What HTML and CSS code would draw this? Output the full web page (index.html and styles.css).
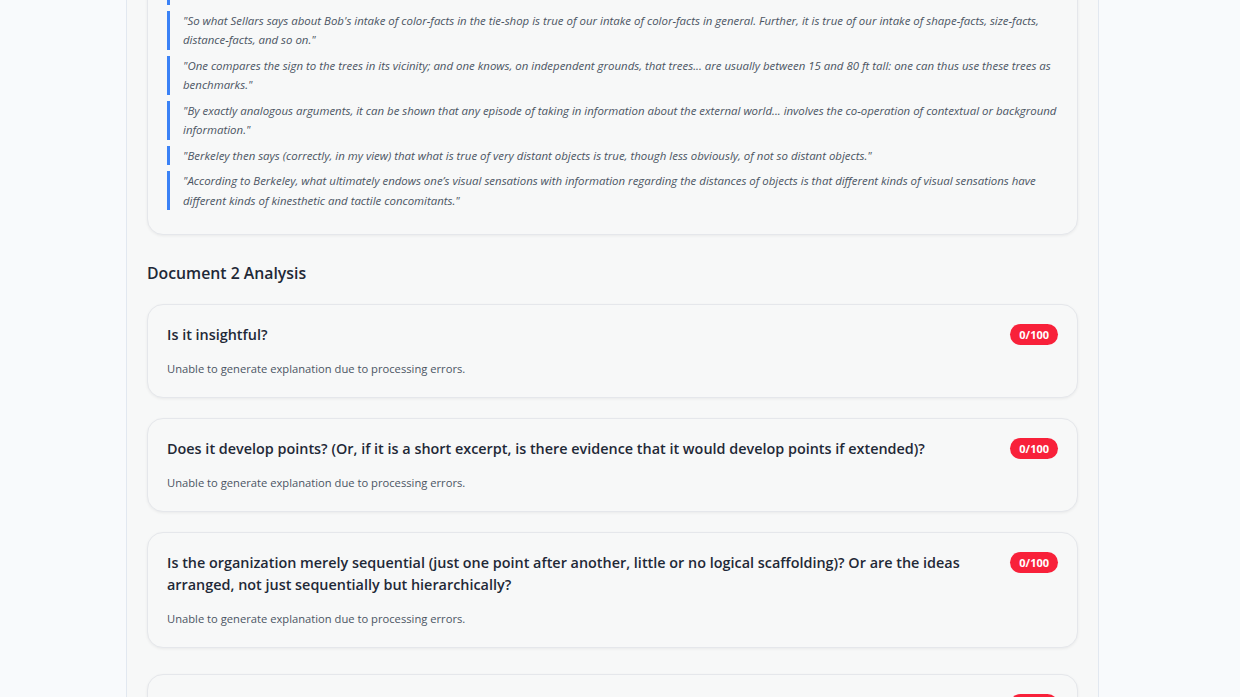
FILE: index.html
```html
<!DOCTYPE html>
<html lang="en">
<head>
<meta charset="utf-8">
<title>Document Analysis</title>
<link rel="stylesheet" href="styles.css">
</head>
<body>
<main class="container">
  <section class="card quotes-card">
    <div class="quotes">
      <blockquote class="quote">"The same is true in the other cases."</blockquote>
      <blockquote class="quote">"So what Sellars says about Bob's intake of color-facts in the tie-shop is true of our intake of color-facts in general. Further, it is true of our intake of shape-facts, size-facts, distance-facts, and so on."</blockquote>
      <blockquote class="quote">"One compares the sign to the trees in its vicinity; and one knows, on independent grounds, that trees... are usually between 15 and 80 ft tall: one can thus use these trees as benchmarks."</blockquote>
      <blockquote class="quote">"By exactly analogous arguments, it can be shown that any episode of taking in information about the external world... involves the co-operation of contextual or background information."</blockquote>
      <blockquote class="quote">"Berkeley then says (correctly, in my view) that what is true of very distant objects is true, though less obviously, of not so distant objects."</blockquote>
      <blockquote class="quote">"According to Berkeley, what ultimately endows one’s visual sensations with information regarding the distances of objects is that different kinds of visual sensations have different kinds of kinesthetic and tactile concomitants."</blockquote>
    </div>
  </section>

  <h2 class="section-title">Document 2 Analysis</h2>

  <div class="criteria">
    <article class="card criterion">
      <div class="criterion-head">
        <h3 class="criterion-title">Is it insightful?</h3>
        <span class="score">0/100</span>
      </div>
      <p class="criterion-text">Unable to generate explanation due to processing errors.</p>
    </article>
    <article class="card criterion">
      <div class="criterion-head">
        <h3 class="criterion-title">Does it develop points? (Or, if it is a short excerpt, is there evidence that it would develop points if extended)?</h3>
        <span class="score">0/100</span>
      </div>
      <p class="criterion-text">Unable to generate explanation due to processing errors.</p>
    </article>
    <article class="card criterion">
      <div class="criterion-head">
        <h3 class="criterion-title">Is the organization merely sequential (just one point after another, little or no logical scaffolding)? Or are the ideas arranged, not just sequentially but hierarchically?</h3>
        <span class="score">0/100</span>
      </div>
      <p class="criterion-text">Unable to generate explanation due to processing errors.</p>
    </article>
    <article class="card criterion criterion-next">
      <div class="criterion-head">
        <h3 class="criterion-title">If the points it makes are not insightful, does it operate skillfully with canons of logic/reasoning?</h3>
        <span class="score">0/100</span>
      </div>
      <p class="criterion-text">Unable to generate explanation due to processing errors.</p>
    </article>
  </div>
</main>
</body>
</html>
```

FILE: styles.css
```css
* { box-sizing: border-box; }

html, body {
  margin: 0;
  padding: 0;
}

body {
  background: #f8fafc;
  font-family: "Open Sans", "Noto Sans", "Liberation Sans", sans-serif;
  color: #1f2937;
  overflow: hidden;
}

.container {
  width: 973px;
  margin: 0 0 0 126px;
  padding: 0 20px 40px;
  background: #f7f8f8;
  border-left: 1px solid #e2e8f0;
  border-right: 1px solid #e2e8f0;
  min-height: 100vh;
}

.card {
  background: #f7f8f8;
  border: 1px solid #e5e7eb;
  border-radius: 16px;
  box-shadow: 0 1px 3px rgba(0, 0, 0, 0.06);
}

.quotes-card {
  margin-top: -36px;
  padding: 20px 19px 24px;
}

.quotes {
  display: flex;
  flex-direction: column;
  gap: 6px;
}

.quote {
  margin: 0;
  padding-left: 13px;
  border-left: 3px solid #3b82f6;
  font-size: 11.45px;
  line-height: 19.5px;
  font-style: italic;
  color: #4b5563;
}

.section-title {
  margin: 24px 0 17px;
  font-size: 15.8px;
  line-height: 28px;
  font-weight: 600;
  color: #1f2937;
}

.criteria {
  display: flex;
  flex-direction: column;
  gap: 20px;
}

.criterion {
  padding: 19px;
}

.criterion-next {
  margin-top: 6px;
}

.criterion-head {
  display: flex;
  justify-content: space-between;
  align-items: flex-start;
  gap: 40px;
}

.criterion-title {
  margin: 0;
  font-size: 14.4px;
  line-height: 22px;
  font-weight: 600;
  color: #1f2937;
}

.score {
  flex: none;
  padding: 0 9px;
  height: 21px;
  line-height: 21px;
  border-radius: 11px;
  background: #f8213a;
  color: #ffffff;
  font-size: 11px;
  font-weight: 700;
}

.criterion-text {
  margin: 14px 0 0;
  font-size: 11.2px;
  line-height: 18px;
  color: #4b5563;
}
```
